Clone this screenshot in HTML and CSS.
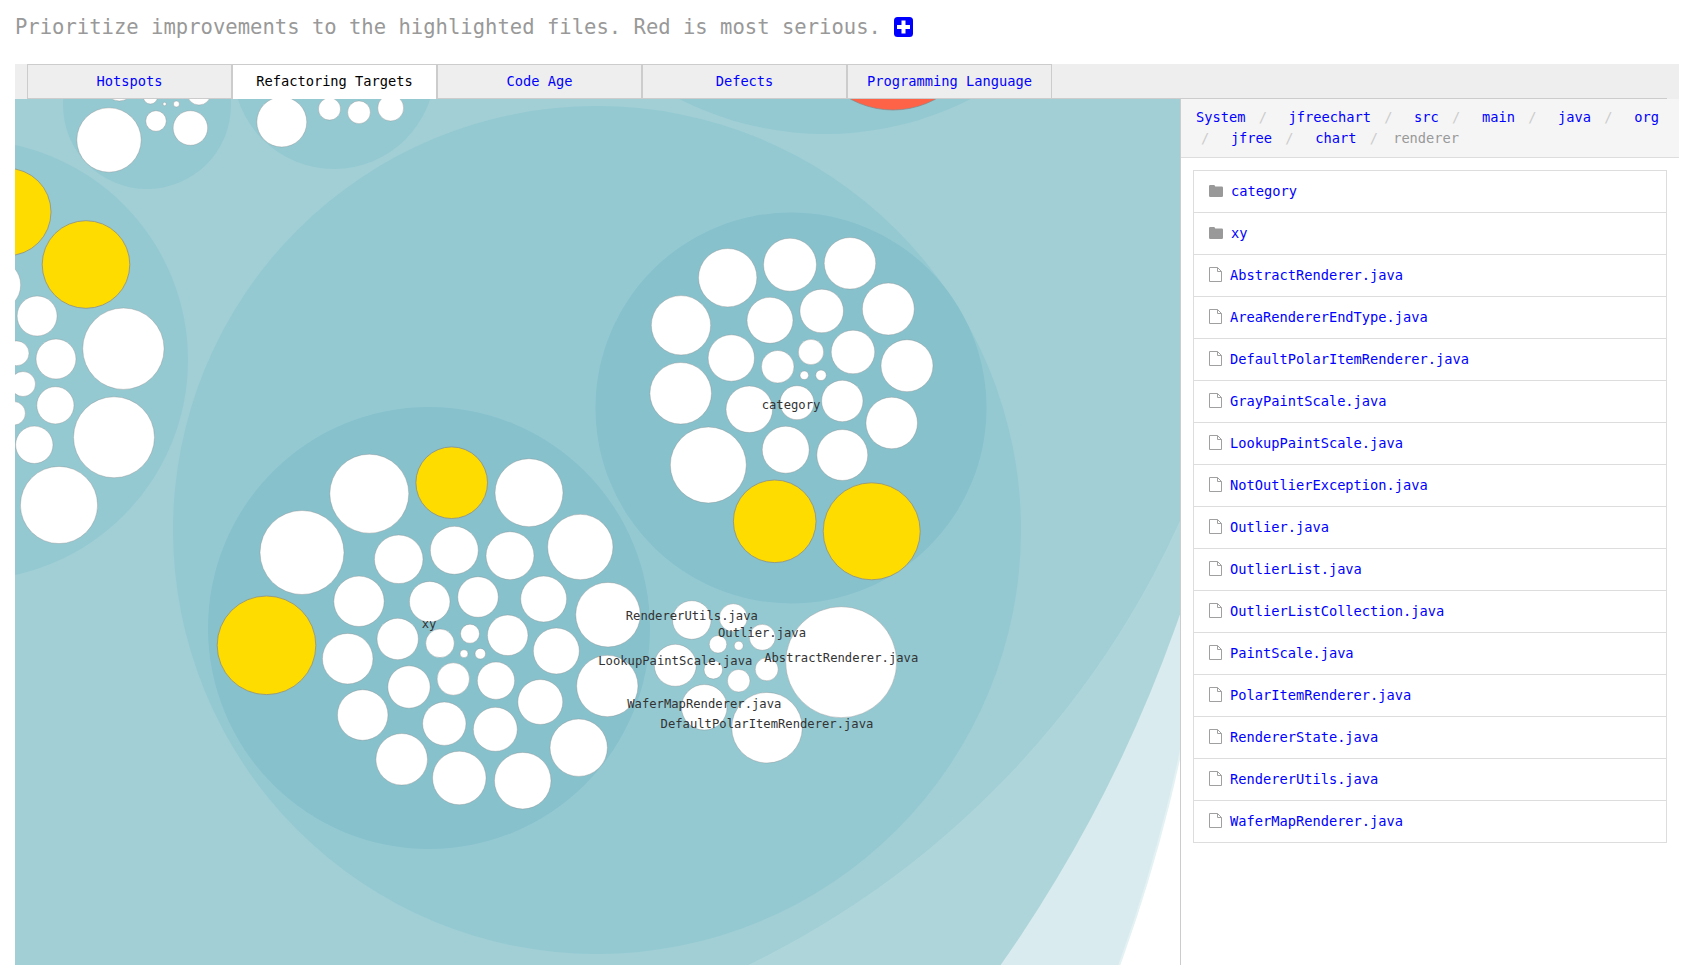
FILE: index.html
```html
<!DOCTYPE html>
<html lang="en">
<head>
  <meta charset="UTF-8" />
  <title>Refactoring Targets</title>
  <link rel="stylesheet" href="styles.css">
</head>
<body>
  <p class="title">Prioritize improvements to the highlighted files. Red is most serious.
    <a href="#" class="plus-link">
      <svg class="plus-icon" viewBox="0 0 19 20"><rect width="19" height="20" rx="3.5" fill="#0000ff"/><path d="M7.5 3.5h4v4.5h4.5v4h-4.5v4.5h-4v-4.5H3v-4h4.5z" fill="#fff"/></svg>
    </a>
  </p>

  <div class="tabbar">
    <ul class="tabs">
      <li><a href="#">Hotspots</a></li>
      <li class="active"><a href="#">Refactoring Targets</a></li>
      <li><a href="#">Code Age</a></li>
      <li><a href="#">Defects</a></li>
      <li><a href="#">Programming Language</a></li>
    </ul>
  </div>

  <div class="main">
    <div class="viz">
      <svg class="chart" width="1165" height="866" viewBox="15 99 1165 866">
        <!-- outer packages -->
        <circle class="pkg0b" cx="-385" cy="417" r="1602"/>
        <circle class="pkg0" cx="-385" cy="417" r="1600"/>
        <circle class="pkg1" cx="-151" cy="155" r="1408"/>
        <circle class="pkg2" cx="352" cy="148" r="908"/>

        <!-- neighbours of renderer -->
        <circle class="pkg3" cx="-32" cy="360" r="220"/>
        <circle class="pkg3" cx="147" cy="105" r="84"/>
        <circle class="pkg3" cx="334" cy="68" r="101"/>
        <circle class="pkg3" cx="825" cy="-187" r="321"/>
        <circle class="red" cx="893" cy="22" r="88"/>

        <circle class="hot" cx="7.3" cy="212" r="43.7"/>
        <circle class="hot" cx="86" cy="264.5" r="43.8"/>
        <circle class="file" cx="-4.6" cy="285" r="25.3"/>
        <circle class="file" cx="37.1" cy="316" r="20"/>
        <circle class="file" cx="123.4" cy="348.7" r="40.7"/>
        <circle class="file" cx="16.6" cy="353.3" r="12.4"/>
        <circle class="file" cx="56" cy="359" r="20"/>
        <circle class="file" cx="23" cy="384" r="12.5"/>
        <circle class="file" cx="55.4" cy="405.3" r="18.6"/>
        <circle class="file" cx="13.6" cy="413.3" r="11.8"/>
        <circle class="file" cx="34.3" cy="444.8" r="18.7"/>
        <circle class="file" cx="114" cy="437.3" r="40.5"/>
        <circle class="file" cx="59" cy="505" r="38.6"/>

        <circle class="file" cx="109" cy="140" r="32.2"/>
        <circle class="file" cx="156" cy="121" r="10.3"/>
        <circle class="file" cx="190.4" cy="128" r="17.3"/>
        <circle class="file" cx="164.6" cy="104" r="1.7"/>
        <circle class="file" cx="176.4" cy="104" r="3"/>
        <circle class="file" cx="119.4" cy="86" r="15"/>
        <circle class="file" cx="150.4" cy="97" r="7"/>
        <circle class="file" cx="199" cy="93" r="12"/>

        <circle class="file" cx="281.8" cy="122" r="25"/>
        <circle class="file" cx="329.5" cy="109" r="11.1"/>
        <circle class="file" cx="359" cy="112.3" r="11.4"/>
        <circle class="file" cx="390.7" cy="108" r="13"/>

        <!-- renderer -->
        <circle class="pkg3" cx="597" cy="530" r="424"/>

        <!-- renderer/xy -->
        <circle class="pkg4" cx="429" cy="628" r="221"/>
        <circle class="hot" cx="266.5" cy="645.3" r="49.3"/>
        <circle class="file" cx="302" cy="552.5" r="42"/>
        <circle class="file" cx="369.3" cy="493.7" r="39.5"/>
        <circle class="hot" cx="451.7" cy="482.7" r="35.8"/>
        <circle class="file" cx="529" cy="492.7" r="34"/>
        <circle class="file" cx="580.3" cy="547" r="32.7"/>
        <circle class="file" cx="608" cy="614.7" r="32.3"/>
        <circle class="file" cx="607.3" cy="686" r="30.7"/>
        <circle class="file" cx="578.7" cy="747.7" r="28.7"/>
        <circle class="file" cx="522.7" cy="780.7" r="28.3"/>
        <circle class="file" cx="459.3" cy="778" r="26.8"/>
        <circle class="file" cx="401.7" cy="759.3" r="25.8"/>
        <circle class="file" cx="362.7" cy="715" r="25.3"/>
        <circle class="file" cx="347.7" cy="658.7" r="25.3"/>
        <circle class="file" cx="359" cy="601.3" r="25.2"/>
        <circle class="file" cx="398.7" cy="559.3" r="24.3"/>
        <circle class="file" cx="454.3" cy="550.3" r="24"/>
        <circle class="file" cx="510" cy="555.7" r="24"/>
        <circle class="file" cx="543.7" cy="599" r="23"/>
        <circle class="file" cx="556.3" cy="651" r="23"/>
        <circle class="file" cx="540.3" cy="702" r="22.5"/>
        <circle class="file" cx="495.3" cy="729.3" r="22"/>
        <circle class="file" cx="444.3" cy="723.7" r="21.7"/>
        <circle class="file" cx="409" cy="687" r="21.2"/>
        <circle class="file" cx="397.7" cy="639" r="20.7"/>
        <circle class="file" cx="429.7" cy="601.7" r="20.3"/>
        <circle class="file" cx="478" cy="597" r="20.3"/>
        <circle class="file" cx="507.7" cy="635.3" r="20.3"/>
        <circle class="file" cx="496" cy="680.7" r="18.7"/>
        <circle class="file" cx="453.3" cy="679" r="16.2"/>
        <circle class="file" cx="440" cy="643.3" r="14.3"/>
        <circle class="file" cx="470" cy="633.7" r="9.5"/>
        <circle class="file" cx="480.3" cy="653.7" r="5.3"/>
        <circle class="file" cx="464" cy="653.7" r="4"/>

        <!-- renderer/category -->
        <circle class="pkg4" cx="791" cy="408" r="195.5"/>
        <circle class="file" cx="727.7" cy="277.7" r="29.2"/>
        <circle class="file" cx="790" cy="264.7" r="26.5"/>
        <circle class="file" cx="850" cy="263.3" r="25.8"/>
        <circle class="file" cx="888.3" cy="309" r="26"/>
        <circle class="file" cx="907" cy="365.7" r="26"/>
        <circle class="file" cx="891.7" cy="423" r="25.8"/>
        <circle class="file" cx="681" cy="325.3" r="29.7"/>
        <circle class="file" cx="680.7" cy="393.3" r="30.8"/>
        <circle class="file" cx="708.3" cy="465" r="38"/>
        <circle class="hot" cx="774.7" cy="521.3" r="41.3"/>
        <circle class="hot" cx="871.7" cy="531.3" r="48.5"/>
        <circle class="file" cx="770" cy="320.3" r="23"/>
        <circle class="file" cx="821.7" cy="311" r="21.8"/>
        <circle class="file" cx="853" cy="352" r="21.8"/>
        <circle class="file" cx="731.3" cy="358" r="23.2"/>
        <circle class="file" cx="777.7" cy="366.7" r="16.3"/>
        <circle class="file" cx="811" cy="352" r="12.7"/>
        <circle class="file" cx="804.3" cy="375.3" r="4.3"/>
        <circle class="file" cx="821" cy="375.3" r="5.3"/>
        <circle class="file" cx="842.3" cy="401" r="20.7"/>
        <circle class="file" cx="797" cy="402.7" r="17"/>
        <circle class="file" cx="749.3" cy="409.3" r="23.3"/>
        <circle class="file" cx="785.7" cy="449.7" r="23.5"/>
        <circle class="file" cx="842.3" cy="455" r="25.5"/>

        <!-- renderer files -->
        <circle class="file" cx="841.2" cy="662.2" r="55.5"/>
        <circle class="file" cx="691.8" cy="620" r="19.3"/>
        <circle class="file" cx="733.3" cy="617.7" r="14"/>
        <circle class="file" cx="762.3" cy="637.3" r="13"/>
        <circle class="file" cx="718" cy="644.3" r="8.8"/>
        <circle class="file" cx="738.7" cy="645.7" r="4.5"/>
        <circle class="file" cx="675.3" cy="665.3" r="21"/>
        <circle class="file" cx="713.3" cy="669.7" r="9.3"/>
        <circle class="file" cx="738.7" cy="680.7" r="11.3"/>
        <circle class="file" cx="766.7" cy="669.3" r="11.5"/>
        <circle class="file" cx="704.3" cy="707.3" r="22.8"/>
        <circle class="file" cx="767" cy="727.7" r="35.3"/>

        <text class="label" x="791" y="409">category</text>
        <text class="label" x="429" y="628">xy</text>
        <text class="label" x="691.8" y="620">RendererUtils.java</text>
        <text class="label" x="762" y="637">Outlier.java</text>
        <text class="label" x="675.3" y="665">LookupPaintScale.java</text>
        <text class="label" x="841.2" y="662">AbstractRenderer.java</text>
        <text class="label" x="704.3" y="708">WaferMapRenderer.java</text>
        <text class="label" x="767" y="728">DefaultPolarItemRenderer.java</text>
      </svg>
    </div>

    <div class="side">
      <ul class="crumbs">
        <li><a href="#">System</a></li>
        <li><a href="#">jfreechart</a></li>
        <li><a href="#">src</a></li>
        <li><a href="#">main</a></li>
        <li><a href="#">java</a></li>
        <li><a href="#">org</a></li>
        <li><a href="#">jfree</a></li>
        <li><a href="#">chart</a></li>
        <li class="current">renderer</li>
      </ul>

      <ul class="files">
        <li class="dir"><svg class="ico-folder" viewBox="0 0 14 12"><path d="M1.2 0h3.6q1 0 1.2 1l.2.6h6.6q1.2 0 1.2 1.2v8q0 1.2-1.2 1.2H1.2Q0 12 0 10.8V1.2Q0 0 1.2 0z" fill="#999"/></svg><a href="#">category</a></li>
        <li class="dir"><svg class="ico-folder" viewBox="0 0 14 12"><path d="M1.2 0h3.6q1 0 1.2 1l.2.6h6.6q1.2 0 1.2 1.2v8q0 1.2-1.2 1.2H1.2Q0 12 0 10.8V1.2Q0 0 1.2 0z" fill="#999"/></svg><a href="#">xy</a></li>
        <li><svg class="ico-file" viewBox="0 0 13 15"><path d="M.5.5h8l4 4v10H.5zM8.5.5v4h4" fill="none" stroke="#a0a0a0"/></svg><a href="#">AbstractRenderer.java</a></li>
        <li><svg class="ico-file" viewBox="0 0 13 15"><path d="M.5.5h8l4 4v10H.5zM8.5.5v4h4" fill="none" stroke="#a0a0a0"/></svg><a href="#">AreaRendererEndType.java</a></li>
        <li><svg class="ico-file" viewBox="0 0 13 15"><path d="M.5.5h8l4 4v10H.5zM8.5.5v4h4" fill="none" stroke="#a0a0a0"/></svg><a href="#">DefaultPolarItemRenderer.java</a></li>
        <li><svg class="ico-file" viewBox="0 0 13 15"><path d="M.5.5h8l4 4v10H.5zM8.5.5v4h4" fill="none" stroke="#a0a0a0"/></svg><a href="#">GrayPaintScale.java</a></li>
        <li><svg class="ico-file" viewBox="0 0 13 15"><path d="M.5.5h8l4 4v10H.5zM8.5.5v4h4" fill="none" stroke="#a0a0a0"/></svg><a href="#">LookupPaintScale.java</a></li>
        <li><svg class="ico-file" viewBox="0 0 13 15"><path d="M.5.5h8l4 4v10H.5zM8.5.5v4h4" fill="none" stroke="#a0a0a0"/></svg><a href="#">NotOutlierException.java</a></li>
        <li><svg class="ico-file" viewBox="0 0 13 15"><path d="M.5.5h8l4 4v10H.5zM8.5.5v4h4" fill="none" stroke="#a0a0a0"/></svg><a href="#">Outlier.java</a></li>
        <li><svg class="ico-file" viewBox="0 0 13 15"><path d="M.5.5h8l4 4v10H.5zM8.5.5v4h4" fill="none" stroke="#a0a0a0"/></svg><a href="#">OutlierList.java</a></li>
        <li><svg class="ico-file" viewBox="0 0 13 15"><path d="M.5.5h8l4 4v10H.5zM8.5.5v4h4" fill="none" stroke="#a0a0a0"/></svg><a href="#">OutlierListCollection.java</a></li>
        <li><svg class="ico-file" viewBox="0 0 13 15"><path d="M.5.5h8l4 4v10H.5zM8.5.5v4h4" fill="none" stroke="#a0a0a0"/></svg><a href="#">PaintScale.java</a></li>
        <li><svg class="ico-file" viewBox="0 0 13 15"><path d="M.5.5h8l4 4v10H.5zM8.5.5v4h4" fill="none" stroke="#a0a0a0"/></svg><a href="#">PolarItemRenderer.java</a></li>
        <li><svg class="ico-file" viewBox="0 0 13 15"><path d="M.5.5h8l4 4v10H.5zM8.5.5v4h4" fill="none" stroke="#a0a0a0"/></svg><a href="#">RendererState.java</a></li>
        <li><svg class="ico-file" viewBox="0 0 13 15"><path d="M.5.5h8l4 4v10H.5zM8.5.5v4h4" fill="none" stroke="#a0a0a0"/></svg><a href="#">RendererUtils.java</a></li>
        <li><svg class="ico-file" viewBox="0 0 13 15"><path d="M.5.5h8l4 4v10H.5zM8.5.5v4h4" fill="none" stroke="#a0a0a0"/></svg><a href="#">WaferMapRenderer.java</a></li>
      </ul>
    </div>
  </div>
</body>
</html>
```

FILE: styles.css
```css
html, body {
  height: 100%;
}
body {
  margin: 0;
  padding: 0 15px;
  overflow: hidden;
  background-color: #fff;
  font-family: "DejaVu Sans Mono", monospace;
  font-size: 13.7px;
  box-sizing: border-box;
}
a {
  color: #0000ff;
  text-decoration: none;
}
ul {
  list-style: none;
  margin: 0;
  padding: 0;
}

.title {
  margin: 0;
  padding: 12px 0 22px;
  height: 30px;
  line-height: 30px;
  font-size: 20.55px;
  color: #999;
}
.plus-icon {
  width: 19px;
  height: 20px;
  vertical-align: -3px;
  margin-left: 1px;
}

.tabbar {
  background-color: #eee;
  padding: 0 12px;
}
.tabs {
  display: flex;
  height: 34px;
  border-bottom: 1px solid #ccc;
}
.tabs li {
  width: 205px;
  height: 34px;
  box-sizing: border-box;
  border: 1px solid #ccc;
  border-bottom: none;
  line-height: 33px;
  text-align: center;
}
.tabs li.active {
  height: 35px;
  background-color: #fff;
}
.tabs li.active a {
  color: #000;
}

.main {
  display: flex;
  height: 866px;
}
.viz {
  width: 1165px;
  flex: none;
}
.chart {
  display: block;
}
.pkg0b { fill: #e4f2f3; }
.pkg0 { fill: #d9ebee; }
.pkg1 { fill: #aed6da; }
.pkg2 { fill: #a1cfd5; }
.pkg3 { fill: #94c9d2; }
.pkg4 { fill: #87c1cc; }
.file, .hot, .red {
  stroke: #888;
  stroke-opacity: 0.35;
  stroke-width: 1;
}
.file { fill: #fff; }
.hot { fill: #ffdc00; stroke-opacity: 0.7; }
.red { fill: #ff6347; stroke-opacity: 0.7; }
.label {
  font-size: 12.2px;
  fill: #333;
  text-anchor: middle;
}

.side {
  flex: 1;
  border-left: 1px solid #ccc;
}
.crumbs {
  background-color: #f5f5f5;
  border-bottom: 1px solid #ddd;
  padding: 8px 15px;
  line-height: 21px;
}
.crumbs li {
  display: inline-block;
}
.crumbs li + li::before {
  content: "/\00a0";
  padding: 0 7px 0 5px;
  color: #ccc;
}
.crumbs li + li a {
  padding-left: 6.4px;
}
.crumbs .current {
  color: #999;
}

.files {
  padding: 12px;
}
.files li {
  display: flex;
  align-items: center;
  height: 39px;
  border: 1px solid #ddd;
  margin-bottom: -1px;
  padding: 0 0 2px 15px;
}
.ico-folder {
  width: 14px;
  height: 12px;
  margin-right: 8px;
}
.ico-file {
  width: 13px;
  height: 15px;
  margin-right: 8px;
}
```
